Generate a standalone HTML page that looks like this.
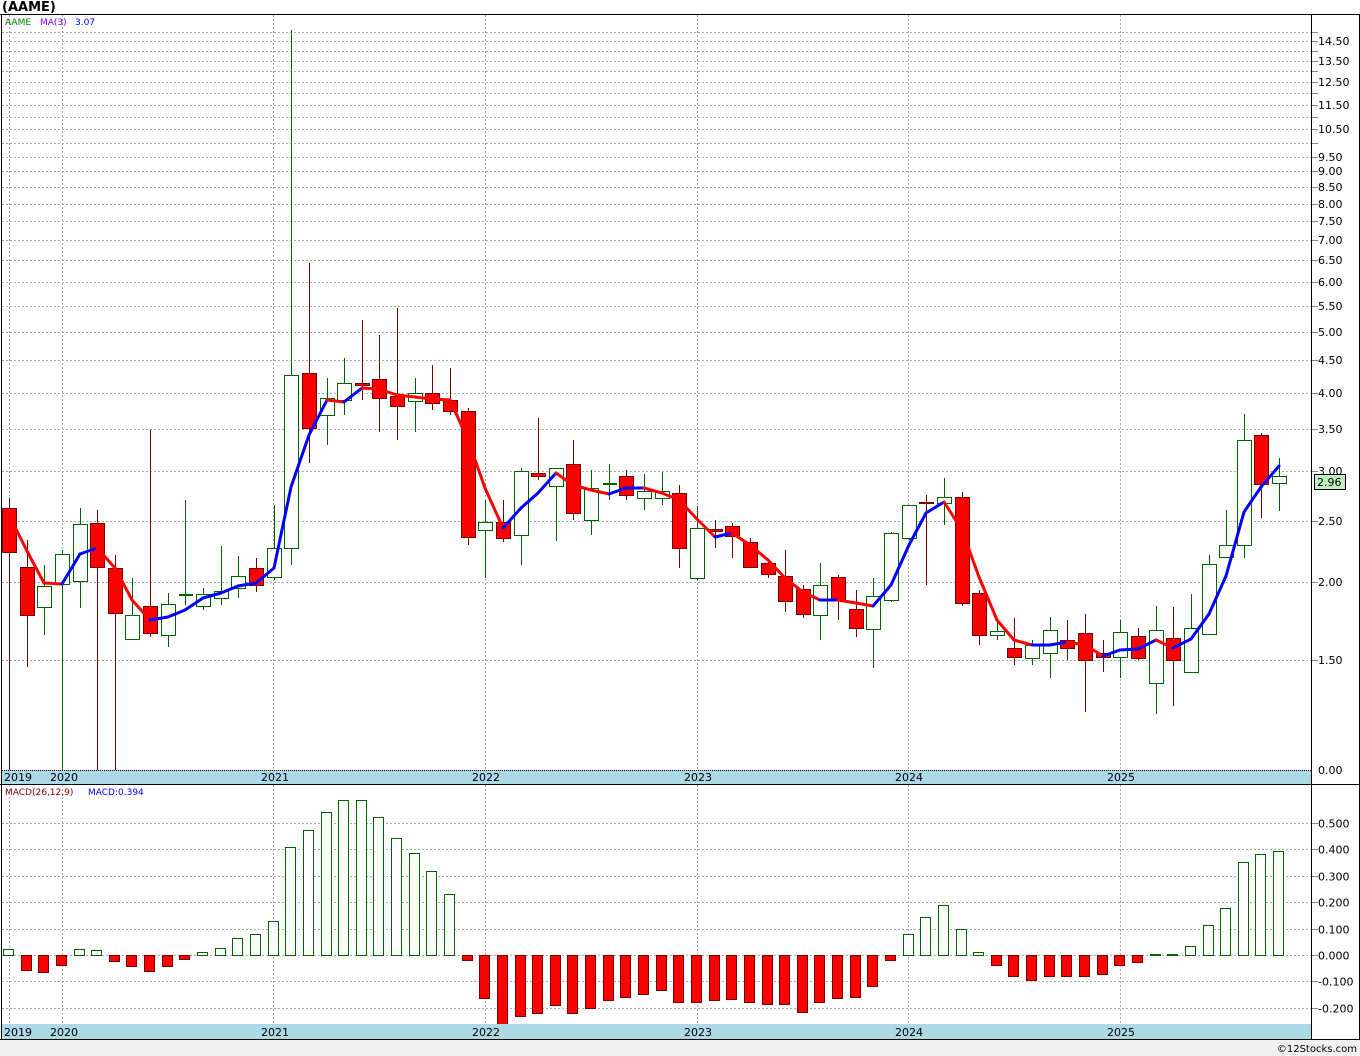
<!DOCTYPE html>
<html><head><meta charset="utf-8"><style>
html,body{margin:0;padding:0;background:#fff;width:1360px;height:1056px;overflow:hidden}
svg{display:block}
text{font-family:"DejaVu Sans","Liberation Sans",sans-serif}
</style></head><body>
<svg id="s" width="1360" height="1056" xmlns="http://www.w3.org/2000/svg"></svg>
<script>
var s=document.getElementById('s'),o='';
function L(x1,y1,x2,y2,c,w,d){o+='<line x1="'+x1+'" y1="'+y1+'" x2="'+x2+'" y2="'+y2+'" stroke="'+c+'" stroke-width="'+(w||1)+'"'+(d?' stroke-dasharray="'+d+'"':'')+'/>';}
function R(x,y,w,h,f,st){o+='<rect x="'+x+'" y="'+y+'" width="'+w+'" height="'+h+'" fill="'+f+'"'+(st?' stroke="'+st+'"':'')+'/>';}
function T(x,y,t,c,sz,b,a){o+='<text x="'+x+'" y="'+y+'" fill="'+c+'" font-size="'+(sz||11)+'"'+(b?' font-weight="bold"':'')+(a?' text-anchor="'+a+'"':'')+'>'+t+'</text>';}
R(0,0,1360,1056,'#fff');
R(0,1040,1360,16,'#f0f0f0');
T(2,11,'(AAME)','#000',13,1);
function py(p){return 660-272.7*Math.log(p/1.5);}
for(var p=1.5;p<=15.01;p+=0.5){var y=Math.round(py(p))+.5;L(2,y,1311,y,'#aaa',1,'2,2');L(1311,y,1318,y,'#888');}
var labs=[14.5,13.5,12.5,11.5,10.5,9.5,9,8.5,8,7.5,7,6.5,6,5.5,5,4.5,4,3.5,3,2.5,2,1.5];
labs.forEach(function(p){T(1318,Math.round(py(p))+4,p.toFixed(2),'#000',11);});
T(1318,774,'0.00','#000',11);
[9,62,273,485,697,908,1120].forEach(function(x){L(x+.5,15,x+.5,770,'#aaa',1,'2,2');L(x+.5,785,x+.5,1024,'#aaa',1,'2,2');});
[0.5,0.4,0.3,0.2,0.1,0,-0.1,-0.2].forEach(function(v){var y=Math.round(955-264*v)+.5;L(2,y,1311,y,'#aaa',1,'2,2');L(1311,y,1318,y,'#888');T(1318,y+4,v.toFixed(3),'#000',11);});
var C=[[508,552,498,770,0],[567,615,540,667,0],[586,607,565,635,1],[554,584,550,770,1],[524,581,508,608,1],[523,567,510,770,0],[568,613,555,770,0],[615,639,578,639,1],[606,633,430,637,0],[604,635,593,647,1],[594,596,500,605,2],[594,606,588,610,1],[591,598,546,605,1],[576,588,556,598,1],[568,585,558,592,0],[548,577,505,580,1],[375,548,30,565,1],[373,428,263,463,0],[398,415,378,445,1],[383,400,358,415,1],[383,385,320,400,0],[379,398,335,432,0],[396,406,308,440,0],[393,401,378,432,1],[393,403,365,410,0],[400,411,368,415,0],[411,537,408,545,0],[522,530,500,578,1],[522,538,500,542,0],[471,535,468,565,1],[473,476,418,480,0],[468,486,468,541,1],[464,513,440,520,0],[488,520,470,535,1],[483,485,464,500,2],[476,495,470,500,0],[491,498,474,510,1],[491,498,472,505,1],[493,548,485,568,0],[528,578,506,580,1],[529,531,520,548,0],[526,536,523,558,0],[542,567,538,568,0],[563,574,560,578,0],[576,601,550,612,0],[589,614,585,618,0],[585,615,563,640,1],[577,600,575,620,0],[609,628,590,637,0],[596,629,578,668,1],[533,600,532,602,1],[505,538,505,540,1],[502,503,495,585,0],[497,503,478,525,1],[497,603,492,606,0],[593,635,590,645,0],[631,635,622,640,1],[648,657,618,665,0],[645,658,640,665,1],[630,653,617,678,1],[640,648,620,660,0],[633,660,614,712,0],[653,657,640,672,0],[632,657,620,678,1],[636,658,628,660,0],[630,683,606,714,1],[638,660,607,706,0],[628,672,594,672,1],[564,634,555,634,1],[545,557,510,558,1],[440,545,414,558,1],[435,484,433,518,0],[476,483,458,511,1]];
function cx(i){return Math.round(9+17.64*i);}
C.forEach(function(c,i){var x=cx(i);var wc=c[4]==0?'#7a0000':'#006400';L(x+.5,c[2],x+.5,c[3],wc,1);
 if(c[4]==0)R(x-6.5,c[0]+.5,14,Math.max(c[1]-c[0],1),'#f00','#7a0000');
 else if(c[4]==2)R(x-6,c[0],14,2,'#006400');
 else R(x-6.5,c[0]+.5,14,Math.max(c[1]-c[0],1),'#fff','#006400');});
var M=[515,551,583,584,554,548,568,600,620,617,610,598,593,586,583,568,487,435,400,402,388,389,395,397,399,400,440,488,528,508,493,473,485,490,494,488,488,493,500,519,537,533,545,560,578,592,600,600,603,606,585,545,513,502,530,577,620,640,645,645,642,645,656,650,649,640,648,639,614,576,512,487,466];
for(var i=1;i<M.length;i++){var c=M[i]>M[i-1]?'#f00':'#00f';o+='<line x1="'+cx(i-1)+'" y1="'+M[i-1]+'" x2="'+cx(i)+'" y2="'+M[i]+'" stroke="'+c+'" stroke-width="3" stroke-linecap="round"/>';}
var B=[949,970,972,965,949,950,961,966,971,966,959,952,948,938,934,921,847,830,812,800,800,817,838,853,871,894,960,998,1024,1016,1013,1005,1013,1008,1000,997,994,990,1002,1002,1000,999,1002,1004,1004,1012,1002,998,997,986,960,934,917,905,929,952,965,976,980,976,976,976,974,965,962,954,954,946,925,908,862,854,851];
B.forEach(function(b,i){var x=cx(i);if(b<955)R(x-5.5,b+.5,10,955-b,'#fff','#006400');else R(x-5.5,955.5,10,b-955,'#f00','#7a0000');});
R(2,770,1309,14,'#add8e6');L(2,770.5,1311,770.5,'#000',1,'1,1');
R(2,1024,1309,15,'#add8e6');
[['2019',4],['2020',50],['2021',261],['2022',472],['2023',684],['2024',895],['2025',1107]].forEach(function(a){T(a[1],781,a[0],'#000',11);T(a[1],1036,a[0],'#000',11);});
L(0,14.5,1360,14.5,'#000');L(1.5,14,1.5,1040,'#000');L(1311.5,14,1311.5,1040,'#000');
L(0,784.5,1360,784.5,'#000');L(0,1039.5,1360,1039.5,'#000');L(1359.5,14,1359.5,1040,'#000');
T(5,25,'AAME','#008000',9);T(40,25,'MA(3)','#8000ff',9);T(75,25,'3.07','#0000ff',9);
T(5,795,'MACD(26,12,9)','#800000',9);T(88,795,'MACD:0.394','#0000ff',9);
R(1314.5,474.5,31,15,'#c0f0c0','#000');T(1317,486,'2.96','#000',11);
T(1357,1052,'©12Stocks.com','#000',10,0,'end');
s.innerHTML=o;
</script>
</body></html>
